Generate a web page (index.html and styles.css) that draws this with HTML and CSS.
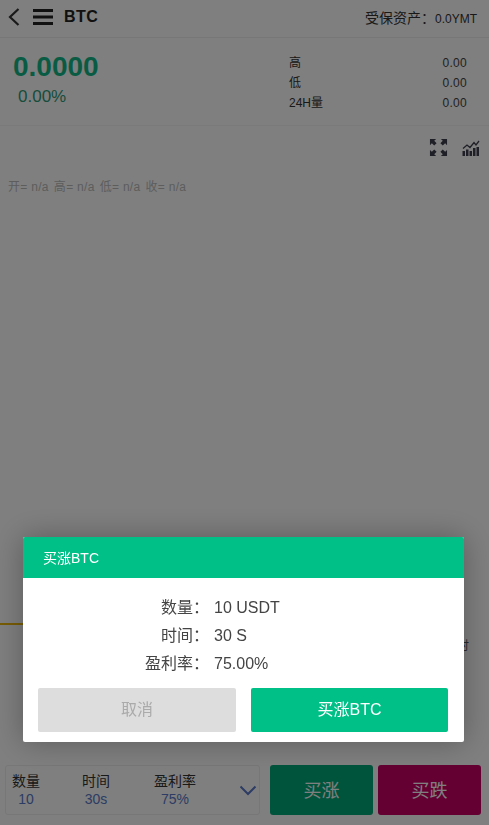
FILE: index.html
```html
<!DOCTYPE html>
<html lang="zh">
<head>
<meta charset="utf-8">
<title>BTC</title>
<link rel="stylesheet" href="styles.css">
</head>
<body>
<div class="page">
  <header class="topbar">
    <div class="topbar-left">
      <svg class="icon-back" viewBox="0 0 12 18" width="12" height="18"><path d="M10.500 1 2 9l8.500 8" fill="none" stroke="#333" stroke-width="2.200"/></svg>
      <svg class="icon-menu" viewBox="0 0 20 16" width="20" height="16"><path d="M0 1.500h20M0 8h20M0 14.500h20" fill="none" stroke="#222" stroke-width="2.800"/></svg>
      <span class="symbol">BTC</span>
    </div>
    <div class="insured"><span class="insured-label">受保资产：</span>0.0YMT</div>
  </header>

  <section class="stats">
    <div class="price-block">
      <div class="price">0.0000</div>
      <div class="change">0.00%</div>
    </div>
    <dl class="hlv">
      <div class="hlv-row"><dt>高</dt><dd>0.00</dd></div>
      <div class="hlv-row"><dt>低</dt><dd>0.00</dd></div>
      <div class="hlv-row"><dt>24H量</dt><dd>0.00</dd></div>
    </dl>
  </section>

  <section class="chart">
    <div class="chart-tools">
      <svg viewBox="0 0 20 20" width="19" height="19"><path d="M1 1h6.500L5.500 3 8 5.500 5.500 8 3 5.500l-2 2zM19 1v6.500l-2-2L14.500 8 12 5.500 14.500 3l-2-2zM1 19v-6.500l2 2L5.500 12 8 14.500 5.500 17l2 2zM19 19h-6.500l2-2L12 14.500l2.500-2.500 2.500 2.500 2-2z" fill="#3f3f50"/></svg>
      <svg viewBox="0 0 18 16" width="18" height="16"><path d="M1 8.500 5 5l3 2.500 4-5 2 2.500 3-4" fill="none" stroke="#3f3f50" stroke-width="1.300"/><path d="M0.500 11h2.500v5H0.500zM4 9.500h2.500V16H4zM7.500 11H10v5H7.500zM11 8h2.500v8H11zM14.500 7H17v9h-2.500z" fill="#3f3f50"/></svg>
    </div>
    <div class="ohlc"><span>开= n/a</span><span>高= n/a</span><span>低= n/a</span><span>收= n/a</span></div>
    <div class="chart-line"></div>
    <div class="chart-axis">时</div>
  </section>

  <footer class="tradebar">
    <div class="selector">
      <div class="sel-item sel-qty"><span class="sel-label">数量</span><span class="sel-value">10</span></div>
      <div class="sel-item sel-time"><span class="sel-label">时间</span><span class="sel-value">30s</span></div>
      <div class="sel-item sel-rate"><span class="sel-label">盈利率</span><span class="sel-value">75%</span></div>
      <svg class="chevron" viewBox="0 0 18 11" width="18" height="11"><path d="M1.500 1.500 9 9l7.500-7.500" fill="none" stroke="#5a78c8" stroke-width="2"/></svg>
    </div>
    <button class="trade-btn up">买涨</button>
    <button class="trade-btn down">买跌</button>
  </footer>
</div>

<div class="overlay"></div>
<div class="modal">
  <div class="modal-head">买涨BTC</div>
  <div class="modal-body">
    <div class="info-row"><span class="info-label">数量：</span><span class="info-value">10 USDT</span></div>
    <div class="info-row"><span class="info-label">时间：</span><span class="info-value">30 S</span></div>
    <div class="info-row"><span class="info-label">盈利率：</span><span class="info-value">75.00%</span></div>
  </div>
  <div class="modal-actions">
    <button class="modal-btn cancel">取消</button>
    <button class="modal-btn confirm">买涨BTC</button>
  </div>
</div>
</body>
</html>
```
FILE: styles.css
```css
* { box-sizing: border-box; }
html, body { margin: 0; height: 100%; }
body {
  font-family: "Liberation Sans", "Noto Sans CJK SC", sans-serif;
  background: #fff;
  color: #333;
  overflow: hidden;
}
.page { width: 489px; height: 825px; display: flex; flex-direction: column; }

.topbar {
  height: 38px;
  flex: none;
  display: flex;
  align-items: center;
  justify-content: space-between;
  padding: 0 12px 3px 8px;
  border-bottom: 1px solid #eee;
}
.topbar-left { display: flex; align-items: center; }
.icon-menu { margin-left: 13px; }
.symbol { margin-left: 11px; font-size: 16px; font-weight: 700; color: #222; letter-spacing: .4px; }
.insured { font-size: 12px; color: #333; padding-bottom: 1px; }
.insured-label { font-size: 14px; }

.stats {
  height: 88px;
  flex: none;
  display: flex;
  justify-content: space-between;
  padding: 12px 22px 0 13px;
  border-bottom: 1px solid #f4f4f4;
}
.price { font-size: 28px; line-height: 34px; font-weight: 700; color: #12b886; }
.change { font-size: 17px; line-height: 20px; margin-top: 3px; margin-left: 5px; color: #2f9a78; }
.hlv { margin: 3px 0 0; width: 178px; font-size: 12px; }
.hlv-row { display: flex; justify-content: space-between; height: 20px; line-height: 20px; }
.hlv-row dt { color: #333; }
.hlv-row dd { margin: 0; color: #444; letter-spacing: .3px; }

.chart { flex: 1; position: relative; padding: 12px 9px 0 8px; }
.chart-tools { display: flex; justify-content: flex-end; align-items: center; gap: 14px; }
.ohlc { display: flex; gap: 5px; margin-top: 20px; font-size: 12px; letter-spacing: .3px; color: #bbb; }
.chart-line { position: absolute; left: 0; width: 40px; top: 497px; height: 2px; background: #f0b90b; }
.chart-axis { position: absolute; left: 457px; top: 510px; font-size: 12px; color: #555; }

.tradebar {
  height: 65px;
  flex: none;
  display: flex;
  padding: 5px 8px 10px 5px;
}
.selector {
  width: 255px;
  border: 1px solid #eee;
  border-radius: 3px;
  position: relative;
}
.sel-item { display: flex; flex-direction: column; align-items: center; position: absolute; top: 6px; }
.sel-qty { left: 6px; }
.sel-time { left: 76px; }
.sel-rate { left: 148px; }
.sel-label { font-size: 14px; line-height: 18px; color: #333; }
.sel-value { font-size: 14px; line-height: 18px; color: #5a78c8; }
.chevron { position: absolute; right: 2px; top: 19px; }
.trade-btn {
  width: 103px;
  height: 50px;
  margin-left: 10px;
  padding: 0 0 2px;
  border: 0;
  border-radius: 3px;
  color: #fff;
  font: 18px "Liberation Sans", "Noto Sans CJK SC", sans-serif;
}
.trade-btn.up { background: #00a878; }
.trade-btn.down { background: #c80064; margin-left: 5px; }

.overlay { position: fixed; inset: 0; background: rgba(0,0,0,.5); }
.modal {
  position: fixed;
  left: 23px;
  top: 537px;
  width: 441px;
  height: 205px;
  background: #fff;
  border-radius: 2px;
  box-shadow: 0 0 30px rgba(0,0,0,.3);
  overflow: hidden;
}
.modal-head {
  height: 41px;
  background: #00c087;
  color: #fff;
  font-size: 14px;
  line-height: 43px;
  padding-left: 20px;
}
.modal-body { padding-top: 16px; }
.info-row { display: flex; height: 28px; line-height: 28px; font-size: 16px; color: #444; }
.info-label { width: 186px; margin-right: 5px; text-align: right; }
.modal-actions { display: flex; justify-content: space-between; padding: 10px 16px 0 15px; }
.modal-btn {
  height: 44px;
  border: 0;
  border-radius: 2px;
  padding: 0 0 5px;
  font: 16px "Liberation Sans", "Noto Sans CJK SC", sans-serif;
}
.cancel { width: 198px; background: #ddd; color: #aaa; }
.confirm { width: 197px; background: #00c087; color: #fff; }
```
